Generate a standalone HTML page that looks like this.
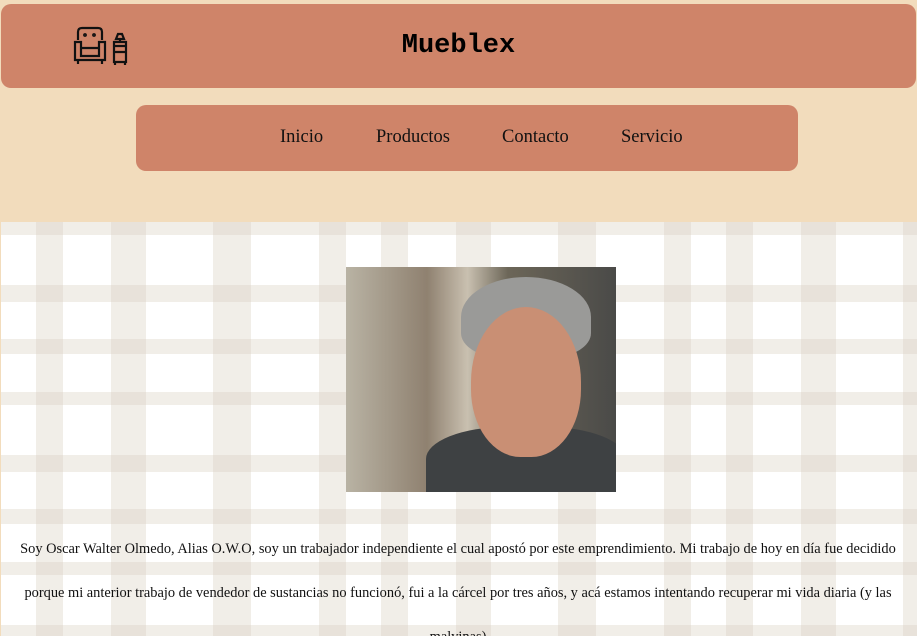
<!DOCTYPE html>
<html><head><meta charset="utf-8"><style>
html,body{margin:0;width:917px;height:636px;overflow:hidden}
body{background:#f2dcbc;font-family:"Liberation Serif",serif;position:relative}
.hdr{position:absolute;left:1px;top:4px;width:915px;height:84px;background:#cf8469;border-radius:10px}
.hdr h1{margin:0;position:absolute;left:0;right:0;top:27px;text-align:center;font:bold 27px "Liberation Mono",monospace;color:#000}
.nav{position:absolute;left:136px;top:105px;width:662px;height:66px;background:#cf8469;border-radius:10px}
.nav span{position:absolute;top:22px;font-size:18.5px;color:#111}
.main{position:absolute;left:1px;top:222px;width:916px;height:414px;background-color:#fff;
background-image:
linear-gradient(90deg,transparent 35px,rgba(215,205,190,.35) 35px,rgba(215,205,190,.35) 62px,transparent 62px,transparent 110px,rgba(215,205,190,.35) 110px,rgba(215,205,190,.35) 145px,transparent 145px,transparent 212px,rgba(215,205,190,.35) 212px,rgba(215,205,190,.35) 250px,transparent 250px,transparent 318px,rgba(215,205,190,.35) 318px,rgba(215,205,190,.35) 345px,transparent 345px),
linear-gradient(180deg,rgba(215,205,190,.35) 0,rgba(215,205,190,.35) 13px,transparent 13px,transparent 63px,rgba(215,205,190,.35) 63px,rgba(215,205,190,.35) 80px,transparent 80px,transparent 117px,rgba(215,205,190,.35) 117px,rgba(215,205,190,.35) 132px,transparent 132px);
background-size:345px 100%,100% 170px}
.photo{position:absolute;left:346px;top:267px;width:270px;height:225px;background:linear-gradient(90deg,#b9b3a4,#8f8170 30%,#c9c0b0 45%,#6c6658 60%,#4a4a48);overflow:hidden}
.face{position:absolute;left:125px;top:40px;width:110px;height:150px;border-radius:50% 50% 45% 45%;background:#c98f74}
.hair{position:absolute;left:115px;top:10px;width:130px;height:80px;border-radius:50% 50% 30% 30%;background:#9a9a98}
.shirt{position:absolute;left:80px;top:160px;width:200px;height:80px;border-radius:40% 40% 0 0;background:#3e4143}
p{position:absolute;left:13px;width:890px;top:527px;margin:0;text-align:center;font-size:14.4px;line-height:44px;color:#111}
</style></head><body>
<div class="hdr">
<svg style="position:absolute;left:71px;top:22px" width="56" height="40" viewBox="0 0 56 40" fill="none" stroke="#111" stroke-width="2.2">
<path d="M6 14V6q0-4 4-4h16q4 0 4 4v8"/><path d="M3 16h6v14h18V16h6v18H3z"/><path d="M9 22h18"/><path d="M6 34v4M30 34v4"/>
<circle cx="13" cy="9" r=".8"/><circle cx="22" cy="9" r=".8"/>
<path d="M44 13h8l-2-5h-4z"/><path d="M48 13v3"/><path d="M42 16h12v20H42zM42 26h12M42 20h12"/><path d="M43 36v3M53 36v3"/>
</svg>
<h1>Mueblex</h1></div>
<div class="nav"><span style="left:144px">Inicio</span><span style="left:240px">Productos</span><span style="left:366px">Contacto</span><span style="left:485px">Servicio</span></div>
<div class="main"></div>
<div class="photo"><div class="hair"></div><div class="shirt"></div><div class="face"></div></div>
<p>Soy Oscar Walter Olmedo, Alias O.W.O, soy un trabajador independiente el cual apostó por este emprendimiento. Mi trabajo de hoy en día fue decidido porque mi anterior trabajo de vendedor de sustancias no funcionó, fui a la cárcel por tres años, y acá estamos intentando recuperar mi vida diaria (y las malvinas)</p>
</body></html>
